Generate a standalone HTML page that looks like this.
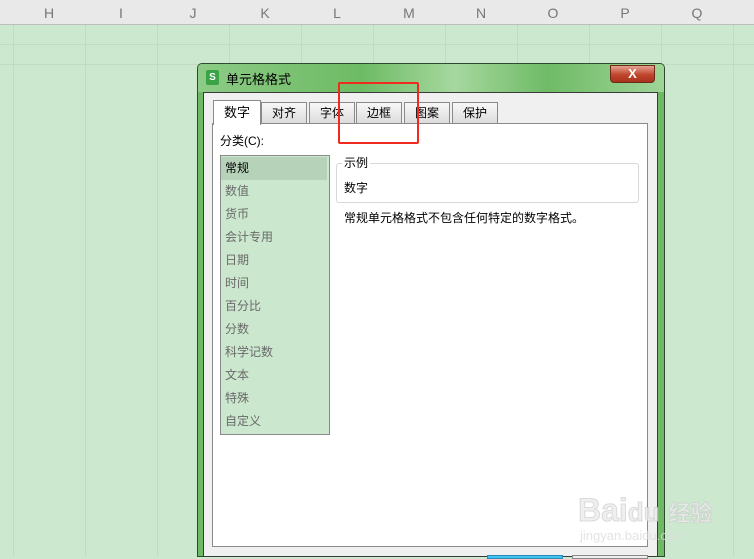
<!DOCTYPE html>
<html><head><meta charset="utf-8"><style>
*{margin:0;padding:0;box-sizing:border-box}
body{width:754px;height:557px;overflow:hidden;position:relative;background:#cce8cf;font-family:"Liberation Sans","Noto Sans CJK SC",sans-serif;font-size:12px;color:#000}
.hdr{position:absolute;left:0;top:0;width:754px;height:25px;background:#e9e9e9;border-bottom:1px solid #bdbdbd}
.hdr span{position:absolute;top:5px;width:72px;text-align:center;color:#777;font-size:14px}
.vl{position:absolute;top:0;width:1px;height:557px;background:#c4d8c6}
.hl{position:absolute;left:0;width:754px;height:1px;background:#c4d8c6}
.a{position:absolute}
</style></head><body>
<div class="hl" style="top:44px"></div><div class="hl" style="top:64px"></div>
<div class="vl" style="left:13px"></div><div class="vl" style="left:85px"></div><div class="vl" style="left:157px"></div><div class="vl" style="left:229px"></div><div class="vl" style="left:301px"></div><div class="vl" style="left:373px"></div><div class="vl" style="left:445px"></div><div class="vl" style="left:517px"></div><div class="vl" style="left:589px"></div><div class="vl" style="left:661px"></div><div class="vl" style="left:733px"></div>
<div class="hdr">
<span style="left:13px">H</span><span style="left:85px">I</span><span style="left:157px">J</span><span style="left:229px">K</span><span style="left:301px">L</span><span style="left:373px">M</span><span style="left:445px">N</span><span style="left:517px">O</span><span style="left:589px">P</span><span style="left:661px">Q</span>
</div>
<div class="a" style="left:197px;top:63px;width:468px;height:494px;background:#6fb866;border:1px solid #2e4a2e;border-radius:5px 5px 0 0"></div>
<div class="a" style="left:198px;top:64px;width:466px;height:28px;border-radius:4px 4px 0 0;background:linear-gradient(90deg,#8dcb86 0%,#6dbb64 35%,#a6d89f 55%,#6fbb66 75%,#9fd598 100%)"></div>
<div class="a" style="left:206px;top:70px;width:13px;height:15px;background:#3aa346;border-radius:2px;color:#fff;font-size:10px;text-align:center;line-height:15px;font-weight:bold">S</div>
<div class="a" style="left:226px;top:69px;font-size:13px">单元格格式</div>
<div class="a" style="left:610px;top:65px;width:45px;height:18px;background:linear-gradient(#e4a391,#c0452c 55%,#a8341c);border:1px solid #6b2a1a;border-radius:0 0 4px 4px;color:#fff;text-align:center;font-weight:bold;font-size:13px;line-height:16px">X</div>
<div class="a" style="left:203px;top:92px;width:455px;height:465px;background:#f0f0f0;border:1px solid #3a3a3a"></div>
<div class="a" style="left:261px;top:102px;width:46px;height:22px;background:linear-gradient(#f8f8f8,#dcdcdc);border:1px solid #8a8a8a;text-align:center;line-height:20px">对齐</div>
<div class="a" style="left:309px;top:102px;width:46px;height:22px;background:linear-gradient(#f8f8f8,#dcdcdc);border:1px solid #8a8a8a;text-align:center;line-height:20px">字体</div>
<div class="a" style="left:356px;top:102px;width:46px;height:22px;background:linear-gradient(#f8f8f8,#dcdcdc);border:1px solid #8a8a8a;text-align:center;line-height:20px">边框</div>
<div class="a" style="left:404px;top:102px;width:46px;height:22px;background:linear-gradient(#f8f8f8,#dcdcdc);border:1px solid #8a8a8a;text-align:center;line-height:20px">图案</div>
<div class="a" style="left:452px;top:102px;width:46px;height:22px;background:linear-gradient(#f8f8f8,#dcdcdc);border:1px solid #8a8a8a;text-align:center;line-height:20px">保护</div>
<div class="a" style="left:212px;top:123px;width:436px;height:424px;background:#fff;border:1px solid #8a8a8a"></div>
<div class="a" style="left:213px;top:100px;width:48px;height:25px;background:#fff;border:1px solid #8a8a8a;border-bottom:none;text-align:center;line-height:23px;font-size:13px">数字</div>
<div class="a" style="left:220px;top:132px;font-size:12px">分类(C):</div>
<div class="a" style="left:220px;top:155px;width:110px;height:280px;background:#cbe7cd;border:1px solid #8a8a8a"></div>
<div class="a" style="left:221px;top:157px;width:106px;height:23px;background:#b6d3b9"></div>
<div class="a" style="left:225px;top:157px;line-height:23px;color:#6a6a6a">
<div style="color:#000">常规</div><div>数值</div><div>货币</div><div>会计专用</div><div>日期</div><div>时间</div><div>百分比</div><div>分数</div><div>科学记数</div><div>文本</div><div>特殊</div><div>自定义</div>
</div>
<div class="a" style="left:336px;top:163px;width:303px;height:40px;border:1px solid #d8d8d8;border-radius:3px"></div>
<div class="a" style="left:342px;top:154px;background:#fff;padding:0 2px">示例</div>
<div class="a" style="left:344px;top:179px">数字</div>
<div class="a" style="left:344px;top:209px">常规单元格格式不包含任何特定的数字格式。</div>
<div class="a" style="left:338px;top:82px;width:81px;height:62px;border:2px solid #f02a1c;border-radius:2px"></div>
<div class="a" style="left:487px;top:555px;width:76px;height:4px;background:#3fc3f2;border:1px solid #2a8ab8"></div>
<div class="a" style="left:572px;top:555px;width:76px;height:4px;background:#eee;border:1px solid #888"></div>
<div class="a" style="left:578px;top:492px;font-size:32px;color:rgba(235,235,235,0.8);font-weight:bold;-webkit-text-stroke:1px rgba(200,200,200,0.6)">Bai<span style="font-size:26px">du</span> <span style="font-size:22px">经验</span></div>
<div class="a" style="left:580px;top:528px;font-size:13px;color:rgba(220,220,220,0.8)">jingyan.baidu.com</div>
</body></html>
